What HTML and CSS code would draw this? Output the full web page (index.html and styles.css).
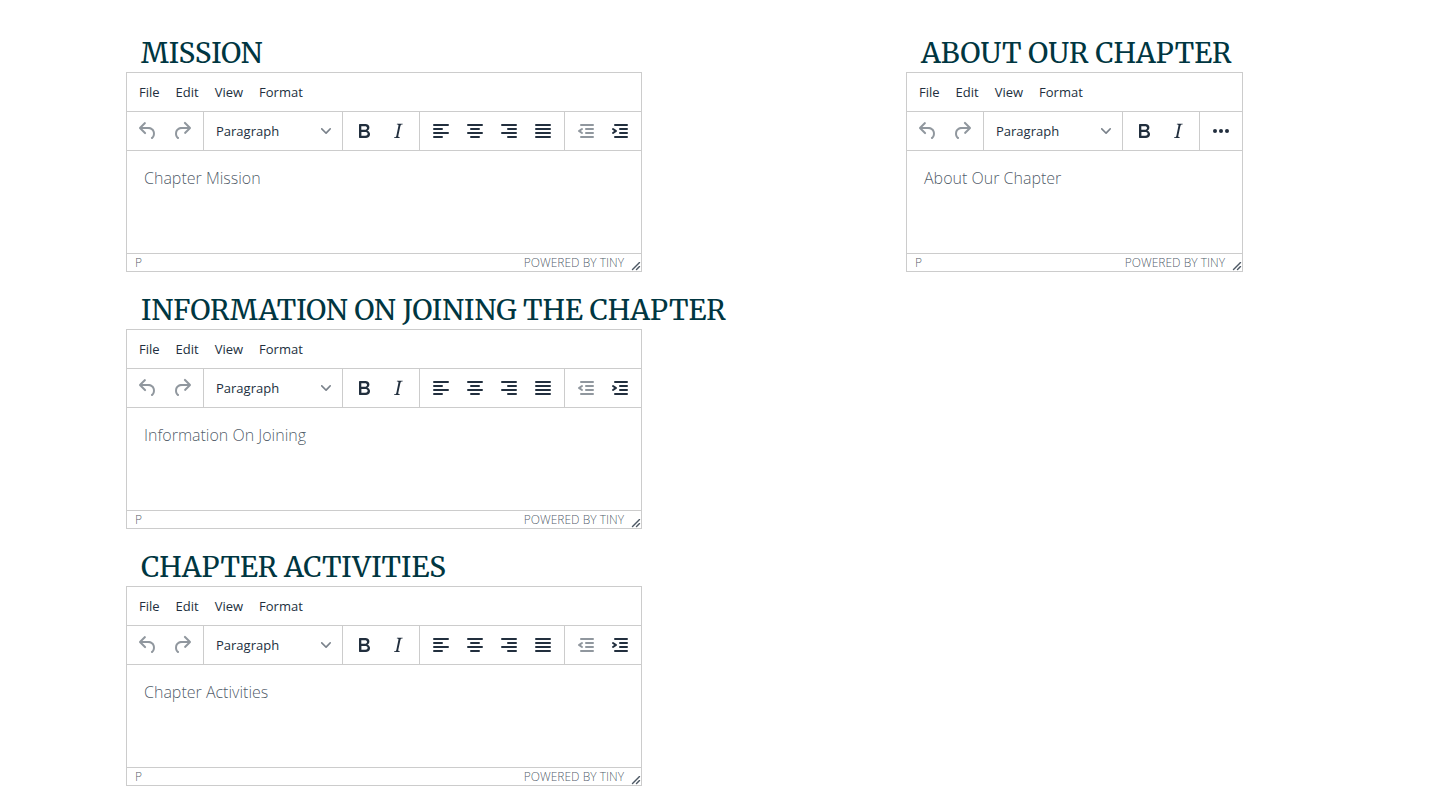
FILE: index.html
```html
<!DOCTYPE html>
<html lang="en">
<head>
<meta charset="utf-8">
<meta name="viewport" content="width=device-width, initial-scale=1">
<title>Chapter details</title>
<link rel="stylesheet" href="styles.css">
</head>
<body>
<svg class="sprite" aria-hidden="true">
  <symbol id="undo" viewBox="0 0 24 24"><path d="M6.4 8H12c3.7 0 6.2 2 6.8 5.1.6 2.7-.4 5.6-2.3 6.8a1 1 0 01-1-1.8c1.1-.6 1.8-2.7 1.4-4.6-.5-2.1-2.1-3.5-4.9-3.5H6.4l3.3 3.3a1 1 0 11-1.4 1.4l-5-5a1 1 0 010-1.4l5-5a1 1 0 011.4 1.4L6.4 8z"/></symbol>
  <symbol id="redo" viewBox="0 0 24 24"><path d="M17.6 10H12c-2.8 0-4.4 1.4-4.9 3.5-.4 2 .3 4 1.4 4.6a1 1 0 11-1 1.8c-2-1.2-2.9-4.1-2.3-6.8.6-3 3-5.1 6.8-5.1h5.6l-3.3-3.3a1 1 0 111.4-1.4l5 5a1 1 0 010 1.4l-5 5a1 1 0 01-1.4-1.4l3.3-3.3z"/></symbol>
  <symbol id="bold" viewBox="0 0 24 24"><path fill-rule="evenodd" d="M7.8 19c-.3 0-.5 0-.6-.2l-.2-.5V5.7c0-.2 0-.4.2-.5l.6-.2h5c1.5 0 2.7.3 3.5 1 .7.6 1.1 1.4 1.1 2.5a3 3 0 01-.6 1.9c-.4.6-1 1-1.6 1.2.4.1.9.3 1.3.6s.8.7 1 1.2c.4.4.5 1 .5 1.6 0 1.3-.4 2.3-1.3 3-.8.7-2.1 1-3.8 1H7.8zm5-8.3c.6 0 1.2-.1 1.6-.5.4-.3.6-.7.6-1.3 0-1.1-.8-1.7-2.3-1.7H9.3v3.5h3.4zm.5 6c.7 0 1.3-.1 1.7-.4.4-.4.6-.9.6-1.5s-.2-1-.7-1.4c-.4-.3-1-.4-2-.4H9.4v3.8h4z"/></symbol>
  <symbol id="italic" viewBox="0 0 24 24"><path d="M16.7 4.7l-.1.9h-.3c-.6 0-1 0-1.4.3-.3.3-.4.6-.5 1.1l-2.1 9.8v.6c0 .5.4.8 1.4.8h.2l-.2.8H8l.2-.8h.2c1.1 0 1.8-.5 2-1.5l2-9.8.1-.5c0-.6-.4-.8-1.4-.8h-.3l.2-.9h5.8z"/></symbol>
  <symbol id="left" viewBox="0 0 24 24"><path d="M5 5h14a1 1 0 010 2H5a1 1 0 010-2zm0 4h8a1 1 0 010 2H5a1 1 0 010-2zm0 8h8a1 1 0 010 2H5a1 1 0 010-2zm0-4h14a1 1 0 010 2H5a1 1 0 010-2z"/></symbol>
  <symbol id="center" viewBox="0 0 24 24"><path d="M5 5h14a1 1 0 010 2H5a1 1 0 010-2zm3 4h8a1 1 0 010 2H8a1 1 0 010-2zm0 8h8a1 1 0 010 2H8a1 1 0 010-2zm-3-4h14a1 1 0 010 2H5a1 1 0 010-2z"/></symbol>
  <symbol id="right" viewBox="0 0 24 24"><path d="M5 5h14a1 1 0 010 2H5a1 1 0 010-2zm6 4h8a1 1 0 010 2h-8a1 1 0 010-2zm0 8h8a1 1 0 010 2h-8a1 1 0 010-2zm-6-4h14a1 1 0 010 2H5a1 1 0 010-2z"/></symbol>
  <symbol id="justify" viewBox="0 0 24 24"><path d="M5 5h14a1 1 0 010 2H5a1 1 0 010-2zm0 4h14a1 1 0 010 2H5a1 1 0 010-2zm0 4h14a1 1 0 010 2H5a1 1 0 010-2zm0 4h14a1 1 0 010 2H5a1 1 0 010-2z"/></symbol>
  <symbol id="outdent" viewBox="0 0 24 24"><path d="M7 5h12a1 1 0 010 2H7a1 1 0 110-2zm5 4h7a1 1 0 010 2h-7a1 1 0 010-2zm0 4h7a1 1 0 010 2h-7a1 1 0 010-2zm-5 4h12a1 1 0 010 2H7a1 1 0 010-2zm1.600-3.800a1 1 0 01-1.200 1.600l-3-2a1 1 0 010-1.600l3-2a1 1 0 011.200 1.600L6.800 12l1.800 1.200z"/></symbol>
  <symbol id="indent" viewBox="0 0 24 24"><path d="M7 5h12a1 1 0 010 2H7a1 1 0 110-2zm5 4h7a1 1 0 010 2h-7a1 1 0 010-2zm0 4h7a1 1 0 010 2h-7a1 1 0 010-2zm-5 4h12a1 1 0 010 2H7a1 1 0 010-2zm-2.600-3.800L6.200 12l-1.800-1.200a1 1 0 011.200-1.600l3 2a1 1 0 010 1.600l-3 2a1 1 0 11-1.200-1.600z"/></symbol>
  <symbol id="more" viewBox="0 0 24 24"><circle cx="6" cy="12" r="2"/><circle cx="12" cy="12" r="2"/><circle cx="18" cy="12" r="2"/></symbol>
  <symbol id="chevron" viewBox="0 0 10 10"><path d="M8.700 2.200c.3-.3.8-.3 1 0 .4.4.4.9 0 1.200L5.700 7.800c-.3.3-.9.3-1.200 0L.2 3.400a.8.8 0 010-1.200c.3-.3.8-.3 1.100 0L5 6l3.700-3.800z"/></symbol>
  <symbol id="resize" viewBox="0 0 10 10"><path d="M8.100 1.100A.5.5 0 119 2l-7 7A.5.5 0 111 8l7-7zM8.100 5.100A.5.5 0 119 6l-3 3A.5.5 0 115 8l3-3z"/></symbol>
</svg>

<main class="page">
  <div class="column">
    <section class="field">
      <h2 class="title"><label for="mission">MISSION</label></h2>
      <div class="editor">
        <div class="menubar"><button class="menu">File</button><button class="menu">Edit</button><button class="menu">View</button><button class="menu">Format</button></div>
        <div class="toolbar">
          <div class="group"><button class="tool" disabled aria-label="Undo"><svg><use href="#undo"/></svg></button><button class="tool" disabled aria-label="Redo"><svg><use href="#redo"/></svg></button></div>
          <div class="group"><div class="picker"><select aria-label="Block format"><option>Paragraph</option></select><svg><use href="#chevron"/></svg></div></div>
          <div class="group"><button class="tool" aria-label="Bold"><svg><use href="#bold"/></svg></button><button class="tool" aria-label="Italic"><svg><use href="#italic"/></svg></button></div>
          <div class="group"><button class="tool" aria-label="Align left"><svg><use href="#left"/></svg></button><button class="tool" aria-label="Align center"><svg><use href="#center"/></svg></button><button class="tool" aria-label="Align right"><svg><use href="#right"/></svg></button><button class="tool" aria-label="Justify"><svg><use href="#justify"/></svg></button></div>
          <div class="group"><button class="tool" disabled aria-label="Decrease indent"><svg><use href="#outdent"/></svg></button><button class="tool" aria-label="Increase indent"><svg><use href="#indent"/></svg></button></div>
        </div>
        <textarea class="content" id="mission" placeholder="Chapter Mission"></textarea>
        <div class="statusbar"><button class="path">P</button><a class="brand" href="#">POWERED BY TINY</a><svg class="grip"><use href="#resize"/></svg></div>
      </div>
    </section>

    <section class="field">
      <h2 class="title"><label for="joining">INFORMATION ON JOINING THE CHAPTER</label></h2>
      <div class="editor">
        <div class="menubar"><button class="menu">File</button><button class="menu">Edit</button><button class="menu">View</button><button class="menu">Format</button></div>
        <div class="toolbar">
          <div class="group"><button class="tool" disabled aria-label="Undo"><svg><use href="#undo"/></svg></button><button class="tool" disabled aria-label="Redo"><svg><use href="#redo"/></svg></button></div>
          <div class="group"><div class="picker"><select aria-label="Block format"><option>Paragraph</option></select><svg><use href="#chevron"/></svg></div></div>
          <div class="group"><button class="tool" aria-label="Bold"><svg><use href="#bold"/></svg></button><button class="tool" aria-label="Italic"><svg><use href="#italic"/></svg></button></div>
          <div class="group"><button class="tool" aria-label="Align left"><svg><use href="#left"/></svg></button><button class="tool" aria-label="Align center"><svg><use href="#center"/></svg></button><button class="tool" aria-label="Align right"><svg><use href="#right"/></svg></button><button class="tool" aria-label="Justify"><svg><use href="#justify"/></svg></button></div>
          <div class="group"><button class="tool" disabled aria-label="Decrease indent"><svg><use href="#outdent"/></svg></button><button class="tool" aria-label="Increase indent"><svg><use href="#indent"/></svg></button></div>
        </div>
        <textarea class="content" id="joining" placeholder="Information On Joining"></textarea>
        <div class="statusbar"><button class="path">P</button><a class="brand" href="#">POWERED BY TINY</a><svg class="grip"><use href="#resize"/></svg></div>
      </div>
    </section>

    <section class="field">
      <h2 class="title"><label for="activities">CHAPTER ACTIVITIES</label></h2>
      <div class="editor">
        <div class="menubar"><button class="menu">File</button><button class="menu">Edit</button><button class="menu">View</button><button class="menu">Format</button></div>
        <div class="toolbar">
          <div class="group"><button class="tool" disabled aria-label="Undo"><svg><use href="#undo"/></svg></button><button class="tool" disabled aria-label="Redo"><svg><use href="#redo"/></svg></button></div>
          <div class="group"><div class="picker"><select aria-label="Block format"><option>Paragraph</option></select><svg><use href="#chevron"/></svg></div></div>
          <div class="group"><button class="tool" aria-label="Bold"><svg><use href="#bold"/></svg></button><button class="tool" aria-label="Italic"><svg><use href="#italic"/></svg></button></div>
          <div class="group"><button class="tool" aria-label="Align left"><svg><use href="#left"/></svg></button><button class="tool" aria-label="Align center"><svg><use href="#center"/></svg></button><button class="tool" aria-label="Align right"><svg><use href="#right"/></svg></button><button class="tool" aria-label="Justify"><svg><use href="#justify"/></svg></button></div>
          <div class="group"><button class="tool" disabled aria-label="Decrease indent"><svg><use href="#outdent"/></svg></button><button class="tool" aria-label="Increase indent"><svg><use href="#indent"/></svg></button></div>
        </div>
        <textarea class="content" id="activities" placeholder="Chapter Activities"></textarea>
        <div class="statusbar"><button class="path">P</button><a class="brand" href="#">POWERED BY TINY</a><svg class="grip"><use href="#resize"/></svg></div>
      </div>
    </section>
  </div>

  <div class="column">
    <section class="field">
      <h2 class="title"><label for="about">ABOUT OUR CHAPTER</label></h2>
      <div class="editor">
        <div class="menubar"><button class="menu">File</button><button class="menu">Edit</button><button class="menu">View</button><button class="menu">Format</button></div>
        <div class="toolbar">
          <div class="group"><button class="tool" disabled aria-label="Undo"><svg><use href="#undo"/></svg></button><button class="tool" disabled aria-label="Redo"><svg><use href="#redo"/></svg></button></div>
          <div class="group"><div class="picker"><select aria-label="Block format"><option>Paragraph</option></select><svg><use href="#chevron"/></svg></div></div>
          <div class="group"><button class="tool" aria-label="Bold"><svg><use href="#bold"/></svg></button><button class="tool" aria-label="Italic"><svg><use href="#italic"/></svg></button></div>
          <div class="group"><button class="tool" aria-label="More"><svg><use href="#more"/></svg></button></div>
        </div>
        <textarea class="content" id="about" placeholder="About Our Chapter"></textarea>
        <div class="statusbar"><button class="path">P</button><a class="brand" href="#">POWERED BY TINY</a><svg class="grip"><use href="#resize"/></svg></div>
      </div>
    </section>
  </div>
</main>
</body>
</html>
```
FILE: styles.css
```css
* { box-sizing: border-box; }

body {
  margin: 0;
  background: #fff;
  color: #222f3e;
  font-family: "Open Sans", "Noto Sans", sans-serif;
}

button, select, textarea {
  margin: 0;
  padding: 0;
  border: 0;
  background: none;
  color: inherit;
  font-family: inherit;
}

svg { display: block; fill: currentColor; }

.sprite { position: absolute; width: 0; height: 0; }

.page {
  display: flex;
  justify-content: space-between;
  align-items: flex-start;
  padding: 34px 209px 13px 126px;
}

.column {
  display: flex;
  flex-direction: column;
  gap: 19px;
}

.title {
  margin: 0;
  padding-left: 15px;
  color: #003641;
  font-family: Merriweather, "Liberation Serif", serif;
  font-size: 28px;
  font-weight: 400;
  font-optical-sizing: none;
  line-height: 38px;
  white-space: nowrap;
}

.editor {
  width: fit-content;
  border: 1px solid #ccc;
}

.menubar {
  display: flex;
  gap: 8px;
  padding: 5px 8px;
  border-bottom: 1px solid #ccc;
}

.menu {
  padding: 0 4px;
  font-size: 13px;
  line-height: 28px;
}

.toolbar {
  display: flex;
  border-bottom: 1px solid #ccc;
}

.group {
  display: flex;
  align-items: center;
  padding: 2px 4px;
}

.group + .group { border-left: 1px solid #ccc; }

.tool {
  width: 34px;
  height: 34px;
  padding: 5px;
}

.tool svg { width: 24px; height: 24px; }

.tool:disabled { color: rgba(34, 47, 62, 0.5); }

.picker { position: relative; width: 130px; }

.picker select {
  width: 100%;
  height: 34px;
  padding: 0 24px 0 8px;
  appearance: none;
  font-size: 13px;
}

.picker svg {
  position: absolute;
  top: 12px;
  right: 7px;
  width: 10px;
  height: 10px;
  color: rgba(34, 47, 62, 0.6);
  pointer-events: none;
}

.content {
  display: block;
  width: 100%;
  height: 102px;
  padding: 16px 17px;
  resize: none;
  font-size: 16px;
  font-weight: 300;
  line-height: 22px;
}

.content::placeholder { color: rgba(34, 47, 62, 0.8); }

.statusbar {
  display: flex;
  align-items: center;
  border-top: 1px solid #ccc;
  padding-left: 8px;
  color: rgba(34, 47, 62, 0.8);
  font-size: 12px;
  font-weight: 300;
  line-height: 17px;
}

.path { font-size: 12px; font-weight: 300; line-height: 17px; }

.brand {
  margin-left: auto;
  margin-right: 7px;
  color: inherit;
  text-decoration: none;
}

.grip {
  align-self: flex-end;
  width: 10px;
  height: 10px;
}
```
